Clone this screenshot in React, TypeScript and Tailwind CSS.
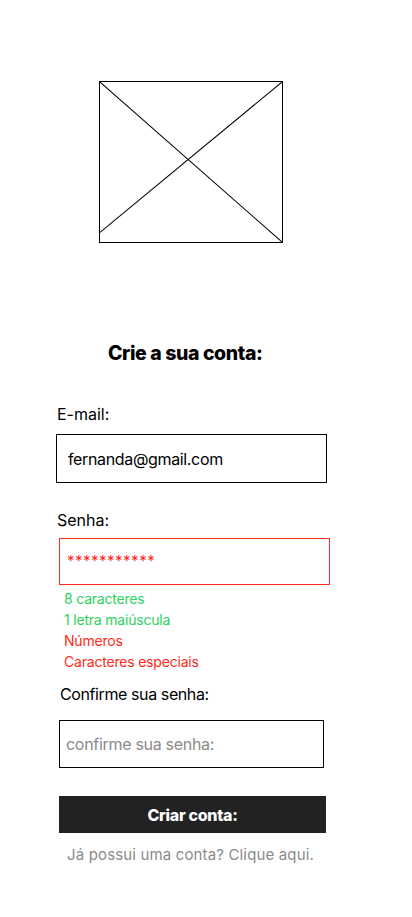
import React from "react";

export default function App() {
  return (
    <div className="min-h-[917px] w-[412px] bg-white text-black" style={{ fontFamily: "Inter, 'Noto Sans', sans-serif" }}>
      <div className="flex flex-col pt-[81px]">
        <div className="ml-[99px] w-[184px] h-[162px] border border-black relative">
          <svg className="absolute inset-0 w-full h-full" viewBox="0 0 100 100" preserveAspectRatio="none">
            <line x1="0" y1="0" x2="100" y2="100" stroke="black" strokeWidth="1" vectorEffect="non-scaling-stroke" />
            <line x1="100" y1="0" x2="0" y2="94" stroke="black" strokeWidth="1" vectorEffect="non-scaling-stroke" />
          </svg>
        </div>

        <h1 className="mt-[99px] ml-[108px] text-[19.5px] leading-[22px] font-extrabold tracking-[-0.4px]">Crie a sua conta:</h1>

        <label className="mt-[38px] ml-[57px] text-[16px] leading-[24px]">E-mail:</label>
        <div className="mt-[8px] ml-[56px] w-[271px] h-[49px] border border-black flex items-center pl-[11px] text-[16px] tracking-[-0.35px]">
          fernanda@gmail.com
        </div>

        <label className="mt-[25px] ml-[57px] text-[16px] leading-[24px]">Senha:</label>
        <div className="mt-[6px] ml-[59px] w-[271px] h-[47px] border border-solid border-[color:#ff2a1a] flex items-center pl-[7px] text-[15px] text-[#ff2a1a] tracking-[0.5px]">
          ***********
        </div>

        <div className="mt-[3px] ml-[64px] flex flex-col text-[14px] leading-[21px] tracking-[-0.2px]">
          <span className="text-[#2ed164]">8 caracteres</span>
          <span className="text-[#2ed164]">1 letra maiúscula</span>
          <span className="text-[#ff2a1a]">Números</span>
          <span className="text-[#ff2a1a]">Caracteres especiais</span>
        </div>

        <label className="mt-[10px] ml-[60px] text-[16px] leading-[24px] tracking-[-0.4px]">Confirme sua senha:</label>
        <div className="mt-[14px] ml-[59px] w-[265px] h-[48px] border border-black flex items-center pl-[6px] text-[16px] text-[#8a8a8a] tracking-[-0.3px]">
          confirme sua senha:
        </div>

        <button className="mt-[28px] ml-[59px] w-[267px] h-[37px] bg-[#222222] text-white font-extrabold text-[16px] tracking-[-0.3px] flex items-center justify-center">
          Criar conta:
        </button>

        <p className="mt-[12px] ml-[67px] text-[15px] leading-[20px] text-[#8a8a8a] tracking-[0.15px]">Já possui uma conta? Clique aqui.</p>
      </div>
    </div>
  );
}
